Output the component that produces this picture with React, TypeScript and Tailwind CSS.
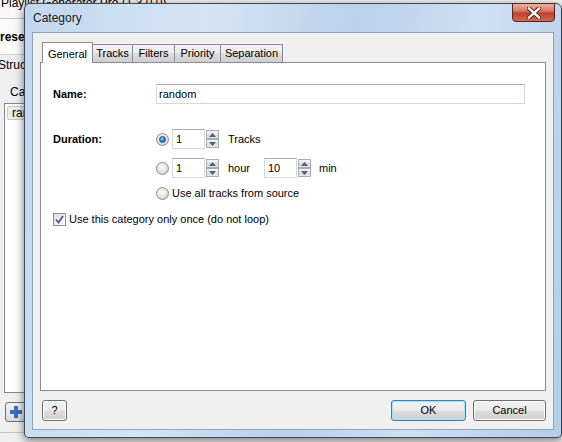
const sans = "font-['Liberation_Sans',Arial,sans-serif]"

function Radio({ checked = false }: { checked?: boolean }) {
  return (
    <span className="flex h-[13px] w-[13px] shrink-0 items-center justify-center rounded-full border border-[#8e8f8f] bg-[radial-gradient(circle_at_45%_40%,#ffffff,#e6e6e6_45%,#c4c4c4)]">
      {checked && (
        <span className="h-[7px] w-[7px] rounded-full border border-[#1c4f87] bg-[radial-gradient(circle_at_40%_35%,#9fdcff,#2a8fd6_45%,#0b3f7a)]" />
      )}
    </span>
  )
}

function SpinBtn({ up = false }: { up?: boolean }) {
  return (
    <div className="flex h-[9px] w-[13px] items-center justify-center border border-[#acacac] bg-[linear-gradient(#f6f6f6,#e6e6e6_50%,#d9d9d9_50%,#e8e8e8)]">
      <svg width="7" height="4" viewBox="0 0 7 4">
        {up ? <path d="M0 4 L3.5 0 L7 4 Z" fill="#4d6185" /> : <path d="M0 0 L3.5 4 L7 0 Z" fill="#4d6185" />}
      </svg>
    </div>
  )
}

function Spin({ value }: { value: string }) {
  return (
    <div className="flex h-5 items-stretch">
      <div className="flex w-[33px] items-center border border-[#d5d8de] border-t-[#abadb3] bg-white pl-[3px]">{value}</div>
      <div className="ml-px flex flex-col justify-center gap-0">
        <SpinBtn up />
        <SpinBtn />
      </div>
    </div>
  )
}

function WinButton({ children, def = false, className = '' }: { children: React.ReactNode; def?: boolean; className?: string }) {
  return (
    <div
      className={
        'flex h-[21px] items-center justify-center rounded-[3px] border bg-[linear-gradient(#f2f2f2,#ebebeb_48%,#dddddd_52%,#cfcfcf)] text-[11px] ' +
        (def ? 'border-[#3c7fb1] shadow-[inset_0_0_0_1px_#a5e3fb] ' : 'border-[#707070] shadow-[inset_0_0_0_1px_#fbfbfb] ') +
        className
      }
    >
      {children}
    </div>
  )
}

export default function App() {
  return (
    <div className={`relative h-[442px] w-[562px] overflow-hidden bg-[#f0f0f0] text-black ${sans}`}>

      {/* ── Main window behind ── */}
      <div className="flex h-full flex-col text-[12px]">
        <div className="h-[19px] overflow-hidden border-b border-[#c8c8c8] bg-[#f7f7f7] pl-[1px] leading-[12px]">
          <div className="-mt-[3px] whitespace-nowrap">Playlist Generator Pro (1.3.0.0)</div>
        </div>
        <div className="flex w-[40px] flex-1 flex-col overflow-hidden">
          <div className="flex h-[36px] shrink-0 items-center border-b border-[#d5d5d5] bg-[#fafafa] -ml-[8px] font-bold">Presets</div>
          <div className="flex h-[20px] shrink-0 items-center -ml-[2px]">Structure</div>
          <div className="mt-[8px] pl-[10px]">Categories</div>
          <div className="ml-[4px] mt-[2px] h-[290px] w-[80px] shrink-0 border border-[#828790] bg-white p-[2px]">
            <div className="h-[14px] w-[60px] rounded-[2px] border border-[#c9c9c9] bg-[#ececec] pl-[4px] leading-[12px]">random</div>
          </div>
          <div className="ml-[5px] mt-[9px] flex h-[20px] w-[30px] shrink-0 items-center rounded-[3px] border border-[#707070] bg-[linear-gradient(#f2f2f2,#dddddd)] pl-[4px]">
            <svg width="12" height="12" viewBox="0 0 12 12">
              <path d="M4.5 0 H7.5 V4.5 H12 V7.5 H7.5 V12 H4.5 V7.5 H0 V4.5 H4.5 Z" fill="#2f6fd0" stroke="#1a4a9a" strokeWidth="0.6" />
            </svg>
          </div>
          <div className="mt-[10px] border-t border-[#c8c8c8]" />
        </div>
      </div>

      {/* ── Category dialog ── */}
      <div className="absolute left-[24px] top-[3px] flex h-[435px] w-[538px] flex-col rounded-t-[6px] rounded-b-[4px] border border-[#3a4a5c] bg-[linear-gradient(100deg,#c2d7ee,#d3e4f5_30%,#bad1ea_55%,#cde0f3_75%,#b4cce7)] px-[7px] pb-[7px] shadow-[0_2px_10px_rgba(0,0,0,0.55)]">
        <div className="relative flex h-[28px] items-center pl-px text-[12px] text-[#1b1b1b]">
          Category
          <div className="absolute -right-[1px] -top-[1px] flex h-[19px] w-[43px] items-center justify-center rounded-b-[4px] border border-[#5a2219] bg-[linear-gradient(#e9b1a4,#d77a66_40%,#c2402a_55%,#cf6a52)]">
            <svg width="14" height="12" viewBox="0 0 14 12">
              <path d="M2 1.5 L12 10.5 M12 1.5 L2 10.5" stroke="#4a1a12" strokeWidth="4.2" strokeLinecap="square" />
              <path d="M2 1.5 L12 10.5 M12 1.5 L2 10.5" stroke="#ffffff" strokeWidth="2.4" strokeLinecap="square" />
            </svg>
          </div>
        </div>

        <div className="flex flex-1 flex-col border border-[#8ca3bd] bg-[#f0f0f0] px-[7px] pb-[8px] pt-[9px] text-[11px]">

          {/* tabs */}
          <div className="flex h-[20px] items-end pl-[2px]">
            <div className="relative z-10 -mb-px flex h-[21px] w-[51px] items-start justify-center border border-b-0 border-[#898c95] bg-white pt-[3px]">General</div>
            <div className="flex h-[18px] w-[40px] items-center justify-center border border-l-0 border-b-0 border-[#898c95] bg-[linear-gradient(#f2f2f2,#ebebeb_50%,#dddddd_50%,#cfcfcf)]">Tracks</div>
            <div className="flex h-[18px] w-[42px] items-center justify-center border border-l-0 border-b-0 border-[#898c95] bg-[linear-gradient(#f2f2f2,#ebebeb_50%,#dddddd_50%,#cfcfcf)]">Filters</div>
            <div className="flex h-[18px] w-[46px] items-center justify-center border border-l-0 border-b-0 border-[#898c95] bg-[linear-gradient(#f2f2f2,#ebebeb_50%,#dddddd_50%,#cfcfcf)]">Priority</div>
            <div className="flex h-[18px] w-[62px] items-center justify-center border border-l-0 border-b-0 border-[#898c95] bg-[linear-gradient(#f2f2f2,#ebebeb_50%,#dddddd_50%,#cfcfcf)]">Separation</div>
          </div>

          {/* panel */}
          <div className="flex-1 border border-[#898c95] bg-white pl-[12px] pt-[21px]">
            <div className="flex h-5 items-center">
              <div className="w-[103px] font-bold">Name:</div>
              <div className="flex h-5 w-[369px] items-center border border-[#d5d8de] border-t-[#abadb3] pl-[2px]">random</div>
            </div>

            <div className="mt-[25px] flex">
              <div className="flex h-5 w-[103px] items-center font-bold">Duration:</div>
              <div className="flex flex-col">
                <div className="flex h-5 items-center">
                  <Radio checked />
                  <div className="ml-[3px]"><Spin value="1" /></div>
                  <span className="ml-[9px]">Tracks</span>
                </div>
                <div className="mt-[9px] flex h-5 items-center">
                  <Radio />
                  <div className="ml-[3px]"><Spin value="1" /></div>
                  <span className="ml-[9px] w-[36px]">hour</span>
                  <Spin value="10" />
                  <span className="ml-[8px]">min</span>
                </div>
                <div className="mt-[8px] flex h-[14px] items-center">
                  <Radio />
                  <span className="ml-[3px]">Use all tracks from source</span>
                </div>
              </div>
            </div>

            <div className="mt-[12px] flex h-[14px] items-center">
              <span className="flex h-[13px] w-[13px] items-center justify-center border border-[#8e8f8f] bg-[linear-gradient(135deg,#dcdcdc,#ffffff)]">
                <svg width="9" height="9" viewBox="0 0 9 9">
                  <path d="M1 4.5 L3.5 7.5 L8 1" fill="none" stroke="#4a5f8a" strokeWidth="1.8" />
                </svg>
              </span>
              <span className="ml-[3px]">Use this category only once (do not loop)</span>
            </div>
          </div>

          {/* buttons */}
          <div className="mt-[9px] flex h-[21px] items-center">
            <WinButton className="ml-[2px] w-[25px]">?</WinButton>
            <div className="flex-1" />
            <WinButton def className="w-[75px]">OK</WinButton>
            <WinButton className="ml-[7px] w-[73px]">Cancel</WinButton>
          </div>
        </div>
      </div>
    </div>
  )
}
